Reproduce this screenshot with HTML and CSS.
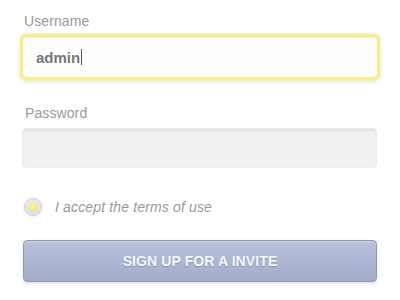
FILE: index.html
```html
<!DOCTYPE html>
<html>
<head>
<meta charset="utf-8">
<link rel="stylesheet" href="styles.css">
</head>
<body>
<div class="form">
  <div class="label label-first">Username</div>
  <div class="field field-focus"><span class="value">admin</span><span class="caret"></span></div>
  <div class="label label-second">Password</div>
  <div class="field field-empty"></div>
  <div class="check-row">
    <span class="radio"><span class="dot"></span></span>
    <span class="check-text">I accept the terms of use</span>
  </div>
  <div class="button">SIGN UP FOR A INVITE</div>
</div>
</body>
</html>
```
FILE: styles.css
```css
html, body {
  margin: 0;
  padding: 0;
  background: #ffffff;
}
body {
  font-family: "Liberation Sans", Arial, sans-serif;
  width: 400px;
  height: 300px;
  overflow: hidden;
}
.form {
  display: flex;
  flex-direction: column;
  padding: 13px 0 0 22px;
  width: 356px;
}
.label {
  font-size: 14px;
  line-height: 16px;
  color: #9a9a9a;
  padding-left: 2px;
  letter-spacing: 0.1px;
}
.label-second {
  margin-top: 27px;
  padding-left: 3px;
}
.field {
  box-sizing: border-box;
  margin-top: 7px;
  border-radius: 4px;
  display: flex;
  align-items: center;
}
.field-focus {
  height: 42px;
  background: #fefefe;
  border: 1px solid #f3ea84;
  box-shadow: 0 0 0 2px #f8f08f, 0 0 1px 3px rgba(248, 240, 143, 0.5), 0 3px 4px 2px rgba(0, 0, 0, 0.08), inset 0 1px 2px rgba(0, 0, 0, 0.05);
  padding-left: 13px;
}
.value {
  font-size: 15px;
  font-weight: bold;
  color: #777777;
}
.caret {
  display: inline-block;
  width: 1px;
  height: 16px;
  background: #555;
  margin-left: 1px;
}
.field-empty {
  height: 40px;
  width: 355px;
  background: #f1f1f1;
  border: 1px solid #ececec;
  box-shadow: inset 0 2px 2px rgba(0, 0, 0, 0.07);
}
.check-row {
  display: flex;
  align-items: center;
  margin-top: 31px;
  height: 16px;
}
.radio {
  box-sizing: border-box;
  width: 18px;
  height: 18px;
  border-radius: 50%;
  margin-left: 2px;
  background: radial-gradient(circle at 50% 40%, #f2f2f2, #d9d9d9);
  border: 1px solid #d4d4d4;
  box-shadow: 0 0 3px 1px rgba(0, 0, 0, 0.07);
  display: flex;
  align-items: center;
  justify-content: center;
}
.dot {
  width: 8px;
  height: 8px;
  border-radius: 50%;
  background: radial-gradient(circle at 50% 40%, #fbf7a8, #ece25c);
  box-shadow: 0 0 1px #cfc35a;
}
.check-text {
  font-size: 14px;
  line-height: 16px;
  font-style: italic;
  color: #9a9a9a;
  margin-left: 13px;
  letter-spacing: 0.15px;
}
.button {
  box-sizing: border-box;
  margin-top: 25px;
  margin-left: 1px;
  width: 354px;
  height: 42px;
  border-radius: 4px;
  border: 1px solid #8f98b5;
  background: linear-gradient(#bac2dc, #a2abc8);
  box-shadow: 0 2px 3px rgba(0, 0, 0, 0.1), inset 0 1px 0 rgba(255, 255, 255, 0.25);
  display: flex;
  align-items: center;
  justify-content: center;
  font-size: 14px;
  font-weight: bold;
  color: #f7f8fc;
  letter-spacing: 0.1px;
  text-shadow: 0 1px 1px rgba(70, 80, 110, 0.35);
}
```
